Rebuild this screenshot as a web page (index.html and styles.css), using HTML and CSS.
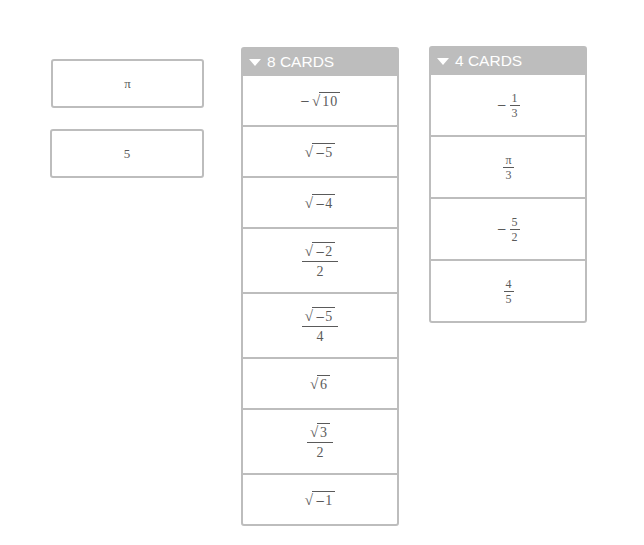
FILE: index.html
```html
<!DOCTYPE html>
<html>
<head>
<meta charset="utf-8">
<link rel="stylesheet" href="styles.css">
</head>
<body>
<div class="board">
  <div class="pool">
    <div class="card"><span class="m">π</span></div>
    <div class="card card2"><span class="m">5</span></div>
  </div>

  <div class="stack stack1">
    <div class="head"><span class="tri"></span>8 CARDS</div>
    <div class="row"><span class="m"><span class="neg">−</span><span class="rad">√</span><span class="over">10</span></span></div>
    <div class="row"><span class="m"><span class="rad">√</span><span class="over"><span class="mn">−</span>5</span></span></div>
    <div class="row"><span class="m"><span class="rad">√</span><span class="over"><span class="mn">−</span>4</span></span></div>
    <div class="row tall"><span class="m frac"><span class="num"><span class="rad">√</span><span class="over"><span class="mn">−</span>2</span></span><span class="den">2</span></span></div>
    <div class="row tall"><span class="m frac"><span class="num"><span class="rad">√</span><span class="over"><span class="mn">−</span>5</span></span><span class="den">4</span></span></div>
    <div class="row"><span class="m"><span class="rad">√</span><span class="over">6</span></span></div>
    <div class="row tall"><span class="m frac"><span class="num"><span class="rad">√</span><span class="over">3</span></span><span class="den">2</span></span></div>
    <div class="row"><span class="m"><span class="rad">√</span><span class="over"><span class="mn">−</span>1</span></span></div>
  </div>

  <div class="stack stack2">
    <div class="head"><span class="tri"></span>4 CARDS</div>
    <div class="row mid"><span class="m"><span class="neg">−</span><span class="frac sm"><span class="num">1</span><span class="den">3</span></span></span></div>
    <div class="row mid"><span class="m"><span class="frac sm"><span class="num">π</span><span class="den">3</span></span></span></div>
    <div class="row mid"><span class="m"><span class="neg">−</span><span class="frac sm"><span class="num">5</span><span class="den">2</span></span></span></div>
    <div class="row mid"><span class="m"><span class="frac sm"><span class="num">4</span><span class="den">5</span></span></span></div>
  </div>
</div>
</body>
</html>
```

FILE: styles.css
```css
html, body {
  margin: 0;
  padding: 0;
  background: #ffffff;
}

.board {
  display: flex;
  align-items: flex-start;
  padding-left: 51px;
}

.pool {
  display: flex;
  flex-direction: column;
  gap: 21px;
  margin-top: 59px;
  width: 153px;
}

.card {
  box-sizing: border-box;
  height: 49px;
  border: 2px solid #bdbdbd;
  border-radius: 3px;
  display: flex;
  align-items: center;
  justify-content: center;
}

.card2 {
  margin-left: -1px;
}

.stack {
  box-sizing: border-box;
  width: 158px;
  border: 2px solid #bdbdbd;
  border-radius: 3px;
  display: flex;
  flex-direction: column;
}

.stack1 {
  margin-left: 37px;
  margin-top: 47px;
}

.stack2 {
  margin-left: 30px;
  margin-top: 46px;
}

.head {
  height: 28px;
  margin-top: -1px;
  background: #bdbdbd;
  color: #ffffff;
  font-family: "Liberation Sans", Arial, sans-serif;
  font-size: 15.5px;
  display: flex;
  align-items: center;
  padding-left: 6px;
}

.tri {
  width: 0;
  height: 0;
  border-left: 6px solid transparent;
  border-right: 6px solid transparent;
  border-top: 7px solid #ffffff;
  margin-right: 6px;
  margin-top: 1px;
}

.row {
  height: 49px;
  border-bottom: 2px solid #bdbdbd;
  display: flex;
  align-items: center;
  justify-content: center;
}

.row:last-child {
  border-bottom: none;
}

.row.tall {
  height: 63px;
}

.row.mid {
  height: 60px;
}

.m {
  font-family: "Liberation Serif", "Times New Roman", serif;
  font-size: 14px;
  color: #5a5a5a;
  display: inline-flex;
  align-items: center;
  line-height: 1;
}

.card .m {
  font-size: 13px;
}

.neg {
  font-family: "DejaVu Serif", serif;
  font-size: 12px;
  margin-right: 2px;
}

.mn {
  font-family: "DejaVu Serif", serif;
  font-size: 12px;
  letter-spacing: 0;
}

.rad {
  font-size: 15px;
  position: relative;
  top: 1px;
}

.over {
  border-top: 1px solid #5a5a5a;
  padding: 2px 2px 0 3px;
  margin-left: -1px;
  letter-spacing: 1px;
}

.frac {
  display: inline-flex;
  flex-direction: column;
  align-items: center;
}

.frac .num {
  display: inline-flex;
  align-items: center;
  padding: 0 3px 2px;
}

.frac .den {
  border-top: 1px solid #5a5a5a;
  align-self: stretch;
  text-align: center;
  padding-top: 3px;
}

.frac.sm {
  font-size: 12px;
  margin-left: 1px;
}

.frac.sm .num {
  padding: 0 2px 1px;
}

.frac.sm .den {
  padding-top: 1px;
}
```
